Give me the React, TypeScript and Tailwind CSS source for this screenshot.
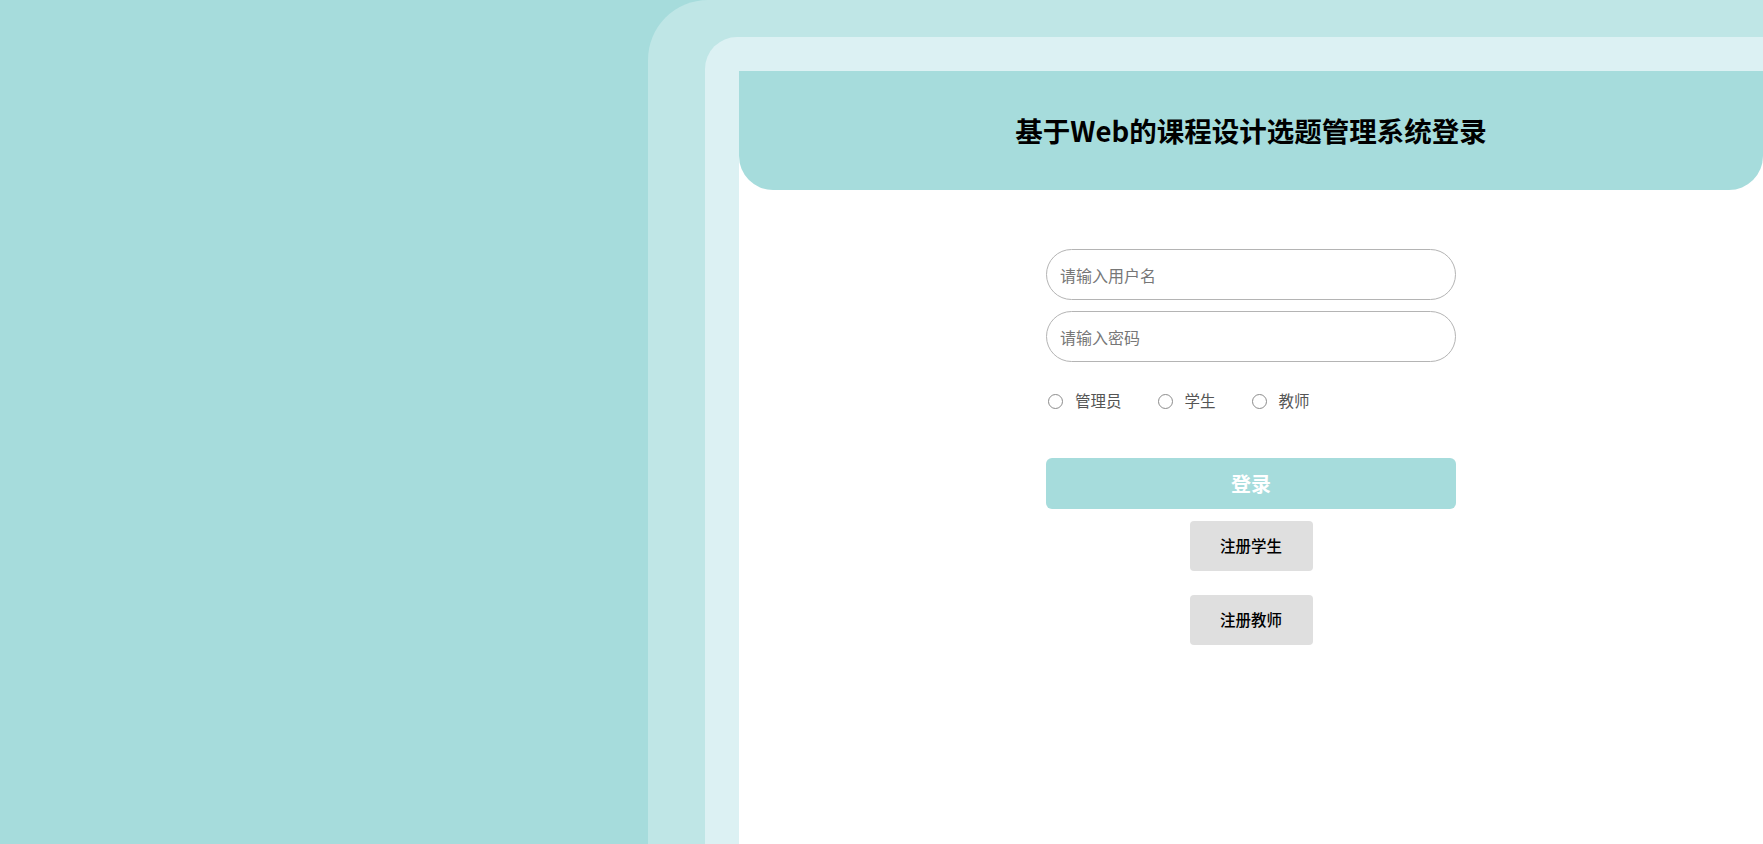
import React, { useState } from 'react'

const ROLES = ['管理员', '学生', '教师']

export default function App() {
    const [role, setRole] = useState('')
    const [username, setUsername] = useState('')
    const [password, setPassword] = useState('')

    return (
        <div
            className="flex h-screen w-full overflow-hidden bg-[#a6dcdc]"
            style={{ fontFamily: '"Noto Sans CJK SC", "Noto Sans", sans-serif' }}
        >
            <div className="w-[648px] shrink-0" />

            {/* outer frame band */}
            <div className="flex flex-1 rounded-tl-[60px] bg-[#bfe6e6] pl-[57px] pt-[37px]">
                {/* inner frame */}
                <div className="flex flex-1 rounded-tl-[32px] bg-[#dcf1f3] pl-[34px] pt-[34px]">
                    <div className="flex flex-1 flex-col bg-white">
                        <div className="flex h-[119px] items-center justify-center rounded-b-[34px] bg-[#a6dcdc]">
                            <h1 className="text-[27.5px] font-bold leading-none text-black">
                                基于Web的课程设计选题管理系统登录
                            </h1>
                        </div>

                        <div className="mx-auto mt-[59px] flex w-[410px] flex-col">
                            <input
                                type="text"
                                value={username}
                                onChange={(e) => setUsername(e.target.value)}
                                placeholder="请输入用户名"
                                className="h-[51px] w-full rounded-full border border-[#b4b4b4] px-[13px] text-[16px] text-[#333] outline-none placeholder:text-[#777]"
                            />
                            <input
                                type="password"
                                value={password}
                                onChange={(e) => setPassword(e.target.value)}
                                placeholder="请输入密码"
                                className="mt-[11px] h-[51px] w-full rounded-full border border-[#b4b4b4] px-[13px] text-[16px] text-[#333] outline-none placeholder:text-[#777]"
                            />

                            <div className="mt-[29px] flex h-[20px] items-center gap-[36px] pl-[2px]">
                                {ROLES.map((r) => (
                                    <label
                                        key={r}
                                        onClick={() => setRole(r)}
                                        className="flex cursor-pointer items-center gap-[12px] text-[15.5px] text-[#555]"
                                    >
                                        <span className="flex h-[15px] w-[15px] items-center justify-center rounded-full border border-[#8c8c8c] bg-white">
                                            {role === r && <span className="h-[8px] w-[8px] rounded-full bg-[#4a90e2]" />}
                                        </span>
                                        {r}
                                    </label>
                                ))}
                            </div>

                            <button className="mt-[47px] h-[51px] w-full rounded-[6px] bg-[#a6dcdc] text-[20px] font-bold text-white">
                                登录
                            </button>

                            <button className="mx-auto mt-[12px] h-[50px] w-[123px] rounded-[4px] bg-[#dfdfdf] text-[15.5px] font-medium text-black">
                                注册学生
                            </button>
                            <button className="mx-auto mt-[24px] h-[50px] w-[123px] rounded-[4px] bg-[#dfdfdf] text-[15.5px] font-medium text-black">
                                注册教师
                            </button>
                        </div>
                    </div>
                </div>
            </div>
        </div>
    )
}
